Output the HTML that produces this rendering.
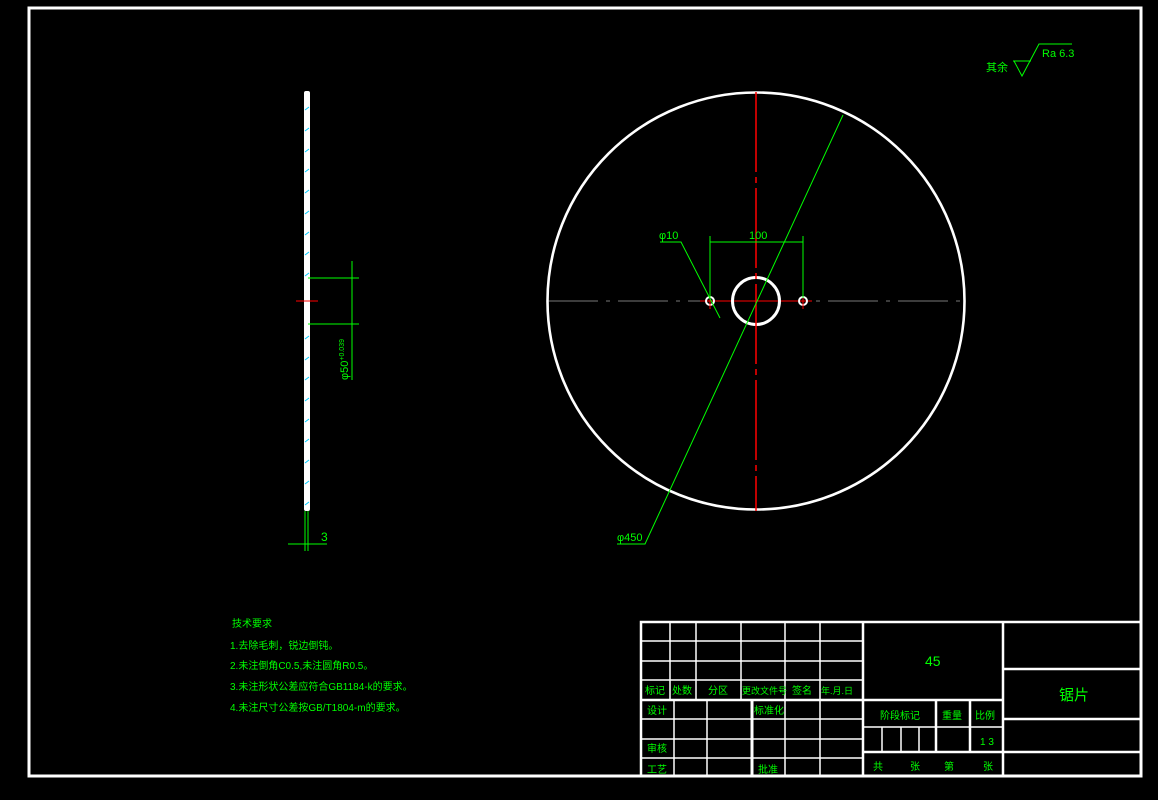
<!DOCTYPE html>
<html><head><meta charset="utf-8"><style>
html,body{margin:0;padding:0;background:#000;}
svg{display:block}
text{font-family:"Liberation Sans","Noto Sans CJK SC",sans-serif;fill:#00ff00;}
</style></head><body>
<svg width="1158" height="800" viewBox="0 0 1158 800" xmlns="http://www.w3.org/2000/svg">
<rect width="1158" height="800" fill="#000"/>
<rect x="29" y="8" width="1112" height="768" fill="none" stroke="#fff" stroke-width="3"/>

<!-- roughness -->
<text x="986" y="71" font-size="11">其余</text>
<path d="M1013 61 L1031 61 M1014 61 L1022 76 L1039 44 L1072 44" fill="none" stroke="#0f0" stroke-width="1"/>
<text x="1042" y="57" font-size="11" font-family="Liberation Mono">Ra 6.3</text>

<!-- main view -->
<line x1="548" y1="301" x2="966" y2="301" stroke="#777" stroke-width="1" stroke-dasharray="50,8,4,8"/>
<line x1="700" y1="301" x2="812" y2="301" stroke="#f00" stroke-width="1"/>
<circle cx="756" cy="301" r="208.5" fill="none" stroke="#fff" stroke-width="2.6"/>
<circle cx="756" cy="301" r="23.5" fill="none" stroke="#fff" stroke-width="3"/>
<circle cx="710" cy="301" r="4" fill="none" stroke="#fff" stroke-width="2"/>
<circle cx="803" cy="301" r="4" fill="none" stroke="#fff" stroke-width="2"/>
<line x1="756" y1="92" x2="756" y2="511" stroke="#f00" stroke-width="1.5" stroke-dasharray="80,5,6,5"/>
<line x1="710" y1="293" x2="710" y2="309" stroke="#f00" stroke-width="1"/>
<line x1="803" y1="293" x2="803" y2="309" stroke="#f00" stroke-width="1"/>
<g stroke="#0f0" stroke-width="1" fill="none">
<line x1="710" y1="236" x2="710" y2="298"/>
<line x1="803" y1="236" x2="803" y2="298"/>
<line x1="710" y1="242" x2="803" y2="242"/>
<polyline points="660,242 681,242 720,318"/>
<polyline points="617,544 645,544 843,115"/>
</g>
<text x="749" y="239" font-size="11" font-family="Liberation Mono">100</text>
<text x="659" y="239" font-size="11" font-family="Liberation Mono">φ10</text>
<text x="617" y="541" font-size="11" font-family="Liberation Mono">φ450</text>

<!-- side view -->
<rect x="304" y="91" width="6" height="420" fill="#fff" rx="2"/>
<g stroke="#0cf" stroke-width="1">
<line x1="305" y1="110" x2="309" y2="107"/><line x1="305" y1="131" x2="309" y2="128"/><line x1="305" y1="152" x2="309" y2="149"/><line x1="305" y1="172" x2="309" y2="169"/><line x1="305" y1="193" x2="309" y2="190"/><line x1="305" y1="214" x2="309" y2="211"/><line x1="305" y1="235" x2="309" y2="232"/><line x1="305" y1="255" x2="309" y2="252"/><line x1="305" y1="276" x2="309" y2="273"/>
<line x1="305" y1="339" x2="309" y2="336"/><line x1="305" y1="360" x2="309" y2="357"/><line x1="305" y1="380" x2="309" y2="377"/><line x1="305" y1="401" x2="309" y2="398"/><line x1="305" y1="422" x2="309" y2="419"/><line x1="305" y1="442" x2="309" y2="439"/><line x1="305" y1="463" x2="309" y2="460"/><line x1="305" y1="484" x2="309" y2="481"/><line x1="305" y1="505" x2="309" y2="502"/>
</g>
<line x1="296" y1="301" x2="318" y2="301" stroke="#f00" stroke-width="1"/>
<g stroke="#0f0" stroke-width="1" fill="none">
<line x1="308" y1="278" x2="359" y2="278"/>
<line x1="308" y1="324" x2="359" y2="324"/>
<line x1="352" y1="261" x2="352" y2="380"/>
<line x1="305" y1="511" x2="305" y2="551"/>
<line x1="308" y1="511" x2="308" y2="551"/>
<line x1="288" y1="544" x2="327" y2="544"/>
</g>
<text x="0" y="0" font-size="11" font-family="Liberation Mono" transform="translate(348,380) rotate(-90)">φ50<tspan font-size="7" dy="-4">+0.039</tspan></text>
<text x="321" y="541" font-size="12" font-family="Liberation Mono">3</text>

<g font-size="10">
<text x="232" y="627">技术要求</text>
<text x="230" y="649">1.去除毛刺，锐边倒钝。</text>
<text x="230" y="669">2.未注倒角C0.5,未注圆角R0.5。</text>
<text x="230" y="690">3.未注形状公差应符合GB1184-k的要求。</text>
<text x="230" y="711">4.未注尺寸公差按GB/T1804-m的要求。</text>
</g>

<g stroke="#fff" stroke-width="1.5" fill="none">
<rect x="641" y="622" width="500" height="154" stroke-width="2.5"/>
<line x1="641" y1="641" x2="863" y2="641"/>
<line x1="641" y1="661" x2="863" y2="661"/>
<line x1="641" y1="680" x2="863" y2="680"/>
<line x1="641" y1="700" x2="863" y2="700" stroke-width="2.5"/>
<line x1="641" y1="719" x2="863" y2="719"/>
<line x1="641" y1="739" x2="863" y2="739"/>
<line x1="641" y1="758" x2="863" y2="758"/>
<line x1="670" y1="622" x2="670" y2="700"/>
<line x1="696" y1="622" x2="696" y2="700"/>
<line x1="741" y1="622" x2="741" y2="700"/>
<line x1="785" y1="622" x2="785" y2="776"/>
<line x1="820" y1="622" x2="820" y2="776"/>
<line x1="674" y1="700" x2="674" y2="776"/>
<line x1="707" y1="700" x2="707" y2="776"/>
<line x1="752" y1="700" x2="752" y2="776" stroke-width="3"/>
<line x1="863" y1="622" x2="863" y2="776" stroke-width="2.5"/>
<line x1="1003" y1="622" x2="1003" y2="776" stroke-width="2.5"/>
<line x1="863" y1="700" x2="1003" y2="700" stroke-width="2.5"/>
<line x1="863" y1="727" x2="1003" y2="727"/>
<line x1="863" y1="752" x2="1003" y2="752" stroke-width="2.5"/>
<line x1="936" y1="700" x2="936" y2="752" stroke-width="2.5"/>
<line x1="970" y1="700" x2="970" y2="752" stroke-width="2.5"/>
<line x1="882" y1="727" x2="882" y2="752"/>
<line x1="901" y1="727" x2="901" y2="752"/>
<line x1="919" y1="727" x2="919" y2="752"/>
<line x1="1003" y1="669" x2="1141" y2="669" stroke-width="2.5"/>
<line x1="1003" y1="719" x2="1141" y2="719" stroke-width="2.5"/>
<line x1="1003" y1="752" x2="1141" y2="752" stroke-width="2.5"/>
</g>
<g font-size="10">
<text x="645" y="694">标记</text>
<text x="672" y="694">处数</text>
<text x="708" y="694">分区</text>
<text x="742" y="694" font-size="9">更改文件号</text>
<text x="792" y="694">签名</text>
<text x="821" y="694" font-size="9">年.月.日</text>
<text x="647" y="714">设计</text>
<text x="754" y="714">标准化</text>
<text x="647" y="752">审核</text>
<text x="647" y="773">工艺</text>
<text x="758" y="773">批准</text>
<text x="880" y="719">阶段标记</text>
<text x="942" y="719">重量</text>
<text x="975" y="719">比例</text>
<text x="980" y="745" font-family="Liberation Mono">1 3</text>
<text x="873" y="770">共</text>
<text x="910" y="770">张</text>
<text x="944" y="770">第</text>
<text x="983" y="770">张</text>
</g>
<text x="925" y="666" font-size="14" font-family="Liberation Mono">45</text>
<text x="1059" y="700" font-size="15">锯片</text>
</svg>
</body></html>
